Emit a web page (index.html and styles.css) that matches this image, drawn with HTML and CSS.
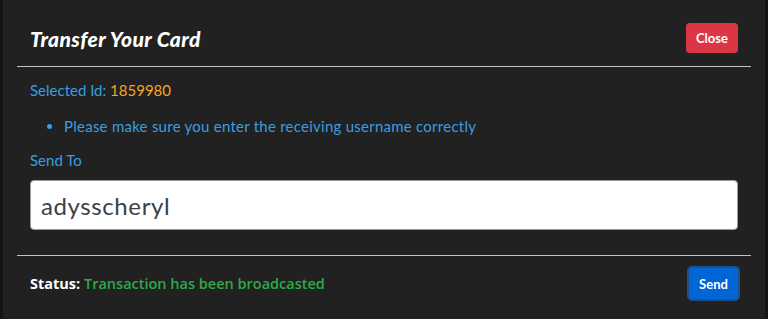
FILE: index.html
```html
<!DOCTYPE html>
<html lang="en">
<head>
    <meta charset="UTF-8">
    <meta name="viewport" content="width=device-width, initial-scale=1.0">
    <title>Transfer Your Card</title>
    <link rel="stylesheet" href="styles.css">
</head>
<body>
    <div class="modal">
        <div class="modalHeader">
            <h2 class="modalTitle">Transfer Your Card</h2>
            <button class="btn btnClose">Close</button>
        </div>
        <div class="modalBody">
            <div class="selected">Selected Id: <span class="cardId">1859980</span></div>
            <ul class="notes">
                <li>Please make sure you enter the receiving username correctly</li>
            </ul>
            <label class="sendLabel" for="sendTo">Send To</label>
            <input type="text" id="sendTo" class="sendInput" value="adysscheryl">
        </div>
        <div class="modalFooter">
            <div class="status"><b>Status:</b> <span class="statusOk">Transaction has been broadcasted</span></div>
            <button class="btn btnSend">Send</button>
        </div>
    </div>
</body>
</html>
```

FILE: styles.css
```css
body
{
    margin: 0;
    background: #151515;
    font-family: Lato, "Open Sans", sans-serif;
}

.modal
{
    margin-left: 3px;
    width: 762px;
    height: 319px;
    background: #212121;
}

.modalHeader
{
    display: flex;
    justify-content: space-between;
    align-items: center;
    margin: 0 14px;
    padding: 23px 13px 13px 13px;
    border-bottom: 1px solid #c4c4c4;
}

.modalTitle
{
    margin: 0;
    color: #fff;
    font-size: 21px;
    font-weight: 900;
    font-style: italic;
    letter-spacing: 0.4px;
}

.btn
{
    border: none;
    border-radius: 4px;
    color: #fff;
    font-family: Lato, sans-serif;
    font-size: 13px;
    font-weight: 700;
    cursor: pointer;
}

.btnClose
{
    width: 52px;
    height: 30px;
    background: #dc3545;
}

.modalBody
{
    margin: 0 14px;
    padding: 14px 13px 25px 13px;
    border-bottom: 1px solid #c4c4c4;
    color: #3a9de0;
    font-size: 15px;
}

.selected
{
    line-height: 18px;
}

.cardId
{
    color: #f5a623;
}

.notes
{
    margin: 18px 0 0 0;
    padding-left: 34px;
    line-height: 18px;
    letter-spacing: 0.25px;
}

.sendLabel
{
    display: block;
    margin-top: 16px;
    line-height: 18px;
}

.sendInput
{
    display: block;
    box-sizing: border-box;
    width: 100%;
    height: 50px;
    margin-top: 11px;
    padding: 0 10px;
    border: 1px solid #999;
    border-radius: 4px;
    background: #fff;
    color: #3a3f4a;
    font-family: Lato, sans-serif;
    font-size: 24px;
    letter-spacing: 0.6px;
}

.modalFooter
{
    display: flex;
    justify-content: space-between;
    align-items: center;
    margin: 0 14px;
    padding: 10px 11px 0 13px;
}

.status
{
    color: #fff;
    font-family: "Open Sans", sans-serif;
    font-size: 14.5px;
}

.status b
{
    font-weight: 700;
}

.statusOk
{
    color: #2eaa45;
    font-weight: 600;
}

.btnSend
{
    width: 53px;
    height: 35px;
    background: #0066d6;
    border: 2px solid #1f4f86;
    border-radius: 5px;
}
```
